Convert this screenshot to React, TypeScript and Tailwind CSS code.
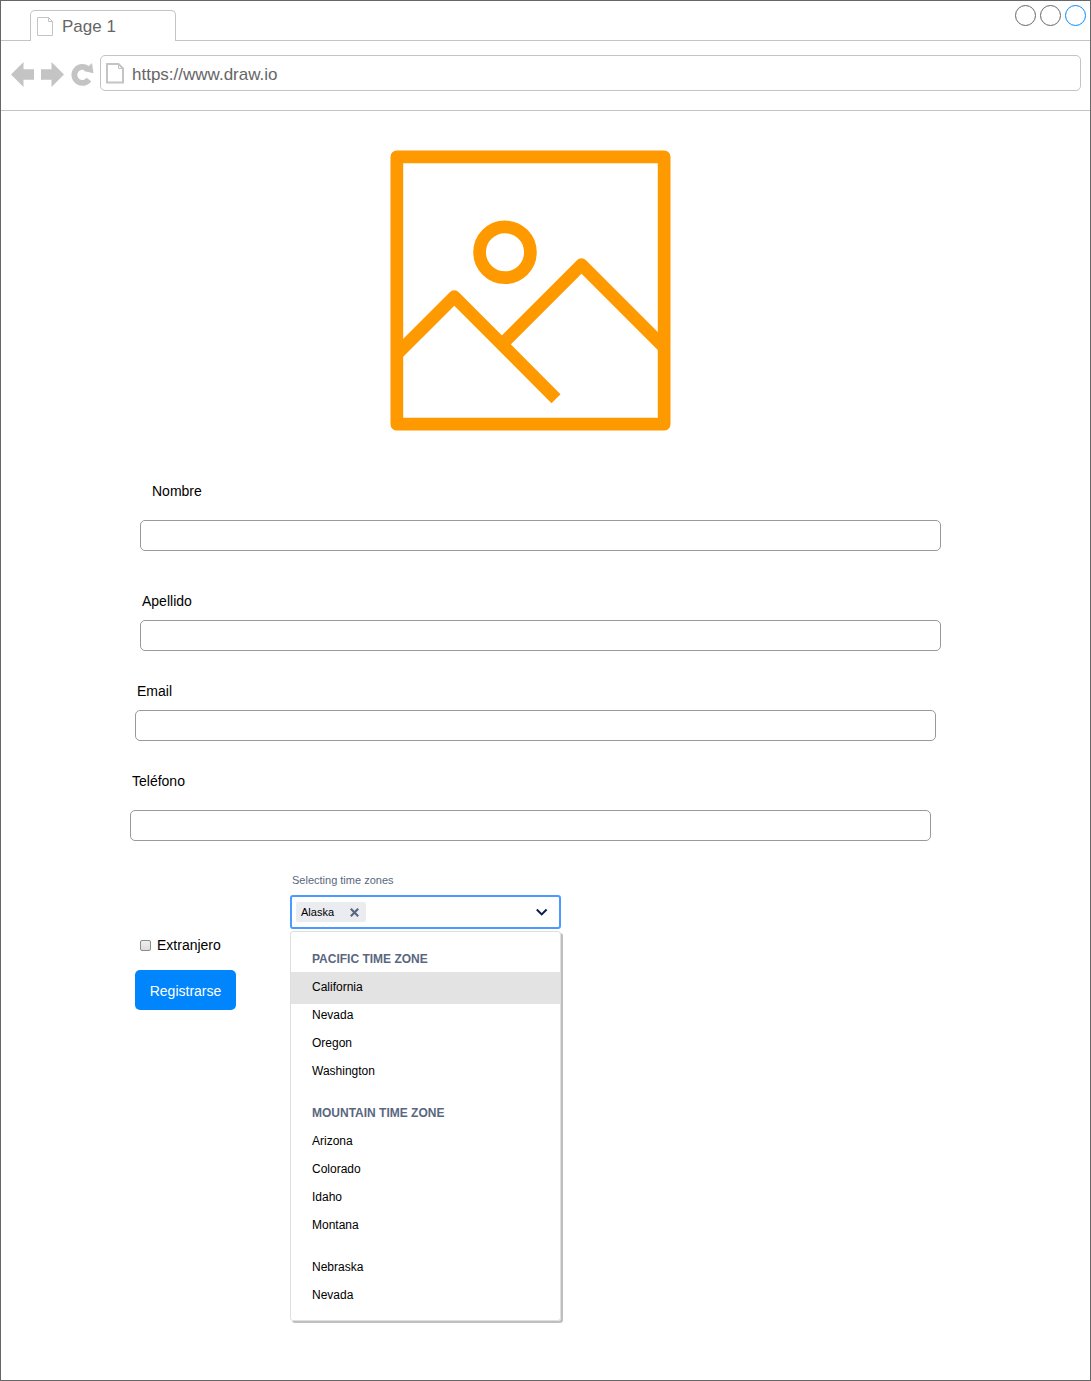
import { useState } from "react";

const chrome = "#c4c4c4";

const fields = [
  { id: "nombre", label: "Nombre", type: "text", box: "ml-[10px] mt-[50px]", text: "ml-[12px] mb-[19px]" },
  { id: "apellido", label: "Apellido", type: "text", box: "ml-[10px] mt-[40px]", text: "ml-[2px] mb-[9px]" },
  { id: "email", label: "Email", type: "email", box: "mx-[5px] mt-[30px]", text: "ml-[2px] mb-[9px]" },
  { id: "telefono", label: "Teléfono", type: "tel", box: "mr-[10px] mt-[30px]", text: "ml-[2px] mb-[19px]" },
];

const groups = [
  { title: "PACIFIC TIME ZONE", options: ["California", "Nevada", "Oregon", "Washington"] },
  { title: "MOUNTAIN TIME ZONE", options: ["Arizona", "Colorado", "Idaho", "Montana"] },
  { title: "", options: ["Nebraska", "Nevada"] },
];

function TabStrip() {
  return (
    <div className="flex h-10 items-stretch">
      <div className="w-[29px] border-b border-[#c4c4c4]" />
      <div className="mt-[9px] flex w-[146px] items-center rounded-t-[5px] border border-b-0 border-[#c4c4c4] pt-[2px] pl-[6px]">
        <svg width="17" height="20" viewBox="0 0 17 20" fill="none" stroke={chrome} aria-hidden="true">
          <path d="M.5.5h11l4 4v14H.5zM11.5.5v4h4" />
        </svg>
        <span className="ml-[8px] text-[17px] leading-5">Page 1</span>
      </div>
      <div className="flex flex-1 justify-end gap-1 border-b border-[#c4c4c4] pt-1 pr-1">
        <button aria-label="Minimize" className="size-[21px] rounded-full border border-[#666666]" />
        <button aria-label="Maximize" className="size-[21px] rounded-full border border-[#666666]" />
        <button aria-label="Close" className="size-[21px] rounded-full border border-[#008cff]" />
      </div>
    </div>
  );
}

function AddressBar() {
  return (
    <div className="flex items-center border-b border-[#c4c4c4] pt-[14px] pr-[9px] pb-[19px] pl-[10px]">
      <button aria-label="Back" className="mr-[7px]">
        <svg width="23" height="28" viewBox="0 0 23 28" fill={chrome} className="block">
          <path d="M0 15.500 12.500 3v7.300H23v10.400H12.500V28z" />
        </svg>
      </button>
      <button aria-label="Forward" className="mr-[7px]">
        <svg width="23" height="28" viewBox="0 0 23 28" fill={chrome} className="block">
          <path d="M23 15.500 10.500 3v7.300H0v10.400h10.500V28z" />
        </svg>
      </button>
      <button aria-label="Reload" className="mr-[6px]">
        <svg width="23" height="28" viewBox="0 0 23 28" fill="none" className="block">
          <path d="M17.900 20.500A8 8 0 1 1 17 10.200" stroke={chrome} strokeWidth="5.800" />
          <path d="M21 4 22.500 14.200l-9.800-2.200z" fill={chrome} />
        </svg>
      </button>
      <div className="flex h-9 flex-1 items-center rounded-[5px] border border-[#c4c4c4] pl-[5px]">
        <svg width="19" height="21" viewBox="0 0 19 21" fill="none" stroke={chrome} aria-hidden="true">
          <path d="M1 1h11.500l4.500 4.500V19.500H1z" strokeWidth="2" />
          <path d="M12.500 1v4.500H17" />
        </svg>
        <input
          aria-label="Address"
          defaultValue="https://www.draw.io"
          className="ml-[7px] min-w-0 flex-1 pt-[3px] text-[17px] leading-5 outline-none"
        />
      </div>
    </div>
  );
}

function Picture() {
  return (
    <svg width="281" height="281" viewBox="0 0 281 281" fill="none" stroke="#ff9900" strokeWidth="12.700" strokeLinejoin="round" className="mr-[10px] self-center" role="img" aria-label="Image">
      <rect x="6.850" y="6.850" width="267.300" height="267.300" />
      <circle cx="115" cy="102.300" r="25.400" />
      <path d="M7 204 64.300 146.700l101.700 102" />
      <path d="M112 194.200 191.500 114.700 274 197.200" />
    </svg>
  );
}

function TimeZones() {
  const [chosen, setChosen] = useState(["Alaska"]);
  return (
    <div className="w-[271px]">
      <label htmlFor="zones" className="ml-[2px] block text-[11px] leading-4 text-[#596780]">
        Selecting time zones
      </label>
      <div className="mt-[7px] flex h-[34px] items-center rounded-[3px] border-2 border-[#4c9aff] pr-[11px] pl-[4px]">
        {chosen.map((name) => (
          <span key={name} className="flex h-5 w-[70px] items-center justify-between rounded-[2px] bg-[#ebecf0] pr-[7px] pl-[5px] text-[11px] leading-4 text-black">
            {name}
            <button type="button" aria-label={"Remove " + name} onClick={() => setChosen([])}>
              <svg width="9" height="9" viewBox="0 0 9 9" fill="none" stroke="#596780" strokeWidth="2.200" className="block">
                <path d="m.8.800 7.400 7.400M8.200.8.800 8.200" />
              </svg>
            </button>
          </span>
        ))}
        <input id="zones" role="combobox" aria-expanded="true" aria-controls="zone-list" className="min-w-0 flex-1 px-1 text-[11px] text-black outline-none" />
        <button type="button" aria-label="Toggle list">
          <svg width="12" height="8" viewBox="0 0 12 8" fill="none" stroke="#0b1f4b" strokeWidth="2" className="block">
            <path d="m.8 1.500 4.900 4.900 4.900-4.900" />
          </svg>
        </button>
      </div>
      <div id="zone-list" role="listbox" aria-label="Time zones" className="mt-[2px] rounded-[3px] border border-[#dfdfdf] pt-[13px] pb-[11px] text-[12px] text-black shadow-[2px_2px_0_#bfbfbf]">
        {groups.map((group, index) => (
          <div key={index} role="group" aria-label={group.title || "More"} className="mb-[14px] last:mb-0">
            {group.title && <div className="h-7 pl-[21px] leading-7 font-bold text-[#596780]">{group.title}</div>}
            {group.options.map((name) =>
              name === "California" ? (
                <button type="button" key={name} role="option" aria-selected="true" className="-mt-px -mb-[3px] block h-8 w-full bg-[#e3e3e3] pb-[2px] pl-[21px] text-left leading-[30px]">
                  {name}
                </button>
              ) : (
                <button type="button" key={name} role="option" aria-selected="false" className="block h-7 w-full pl-[21px] text-left leading-7">
                  {name}
                </button>
              ),
            )}
          </div>
        ))}
      </div>
    </div>
  );
}

export default function App() {
  return (
    <div className="flex min-h-screen flex-col border border-[#666666] bg-white font-['Liberation_Sans',Arial,sans-serif] text-[#666666]">
      <header>
        <TabStrip />
        <AddressBar />
      </header>
      <form className="flex flex-col pt-[39px] pr-[149px] pb-14 pl-[129px] text-[14px] text-black" onSubmit={(e) => e.preventDefault()}>
        <Picture />
        {fields.map((field) => (
          <div key={field.id} className={field.box}>
            <label htmlFor={field.id} className={"block w-fit leading-5 " + field.text}>
              {field.label}
            </label>
            <input id={field.id} type={field.type} className="block h-[31px] w-full rounded-[5px] border border-[#999999] px-2 outline-none" />
          </div>
        ))}
        <div className="mt-[31px] flex items-start">
          <div className="mt-[63px] mr-[54px] ml-[5px] flex flex-col items-start">
            <label className="ml-[5px] flex items-center gap-[6px] leading-5">
              <input type="checkbox" className="size-[11px] appearance-none rounded-[2px] border border-[#8c8c8c] bg-linear-to-b from-[#eeeeee] to-[#dddddd] checked:bg-[#0085fc]" />
              Extranjero
            </label>
            <button type="submit" className="mt-[15px] h-10 w-[101px] rounded-[5px] bg-[#0085fc] pt-[2px] text-white">
              Registrarse
            </button>
          </div>
          <TimeZones />
        </div>
      </form>
    </div>
  );
}
